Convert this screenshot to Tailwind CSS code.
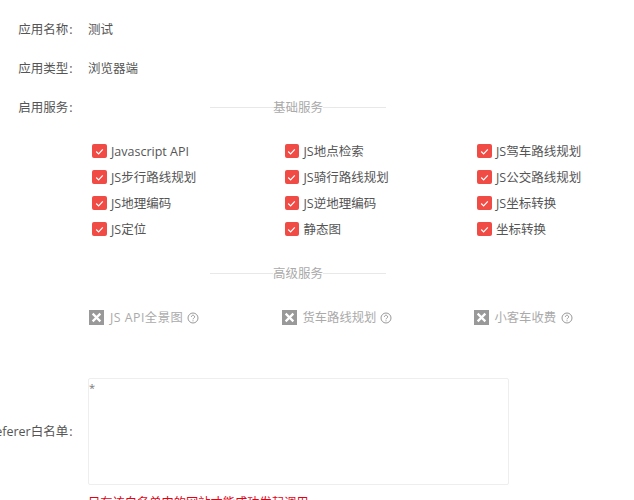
<!DOCTYPE html>
<html lang="zh-CN">
<head>
<meta charset="utf-8">
<script src="https://cdn.jsdelivr.net/npm/@tailwindcss/browser@4"></script>
</head>
<body class="bg-white">
<div class="relative h-[500px] w-[634px] overflow-hidden font-['Open_Sans','Noto_Sans_CJK_SC',sans-serif] text-[12.5px] text-[#555]">
  <div class="flex h-[20px] mt-[20px] items-center">
    <div class="w-[72.5px] shrink-0 whitespace-nowrap text-right">应用名称<span class="ml-px">:</span></div>
    <div class="ml-[15.5px]">测试</div>
  </div>
  <div class="flex h-[20px] mt-[19px] items-center">
    <div class="w-[72.5px] shrink-0 whitespace-nowrap text-right">应用类型<span class="ml-px">:</span></div>
    <div class="ml-[15.5px]">浏览器端</div>
  </div>
  <div class="flex h-[20px] mt-[19px] items-center">
    <div class="w-[72.5px] shrink-0 whitespace-nowrap text-right">启用服务<span class="ml-px">:</span></div>
    <div class="ml-[137.5px] flex items-center text-[#aaa]">
      <span class="h-px w-[63px] -translate-y-px bg-[#e8e8e8]"></span>
      <span>基础服务</span>
      <span class="h-px w-[63px] -translate-y-px bg-[#e8e8e8]"></span>
    </div>
  </div>

  <div class="ml-[92px] mt-[21px] grid w-[542px] grid-cols-[192.5px_192.5px_1fr] auto-rows-[26px] items-center">
    <label class="flex items-center"><span class="flex size-[14.5px] -translate-y-px items-center justify-center rounded-[2px] bg-[#f04b45]"><svg class="size-[11px]" viewBox="0 0 10 10" fill="none" stroke="#fff" stroke-width="1.1"><path d="M2 5l2.2 2.2L8 3"/></svg></span><span class="ml-[4.5px]">Javascript API</span></label>
    <label class="flex items-center"><span class="flex size-[14.5px] -translate-y-px items-center justify-center rounded-[2px] bg-[#f04b45]"><svg class="size-[11px]" viewBox="0 0 10 10" fill="none" stroke="#fff" stroke-width="1.1"><path d="M2 5l2.2 2.2L8 3"/></svg></span><span class="ml-[4.5px]">JS地点检索</span></label>
    <label class="flex items-center"><span class="flex size-[14.5px] -translate-y-px items-center justify-center rounded-[2px] bg-[#f04b45]"><svg class="size-[11px]" viewBox="0 0 10 10" fill="none" stroke="#fff" stroke-width="1.1"><path d="M2 5l2.2 2.2L8 3"/></svg></span><span class="ml-[4.5px]">JS驾车路线规划</span></label>
    <label class="flex items-center"><span class="flex size-[14.5px] -translate-y-px items-center justify-center rounded-[2px] bg-[#f04b45]"><svg class="size-[11px]" viewBox="0 0 10 10" fill="none" stroke="#fff" stroke-width="1.1"><path d="M2 5l2.2 2.2L8 3"/></svg></span><span class="ml-[4.5px]">JS步行路线规划</span></label>
    <label class="flex items-center"><span class="flex size-[14.5px] -translate-y-px items-center justify-center rounded-[2px] bg-[#f04b45]"><svg class="size-[11px]" viewBox="0 0 10 10" fill="none" stroke="#fff" stroke-width="1.1"><path d="M2 5l2.2 2.2L8 3"/></svg></span><span class="ml-[4.5px]">JS骑行路线规划</span></label>
    <label class="flex items-center"><span class="flex size-[14.5px] -translate-y-px items-center justify-center rounded-[2px] bg-[#f04b45]"><svg class="size-[11px]" viewBox="0 0 10 10" fill="none" stroke="#fff" stroke-width="1.1"><path d="M2 5l2.2 2.2L8 3"/></svg></span><span class="ml-[4.5px]">JS公交路线规划</span></label>
    <label class="flex items-center"><span class="flex size-[14.5px] -translate-y-px items-center justify-center rounded-[2px] bg-[#f04b45]"><svg class="size-[11px]" viewBox="0 0 10 10" fill="none" stroke="#fff" stroke-width="1.1"><path d="M2 5l2.2 2.2L8 3"/></svg></span><span class="ml-[4.5px]">JS地理编码</span></label>
    <label class="flex items-center"><span class="flex size-[14.5px] -translate-y-px items-center justify-center rounded-[2px] bg-[#f04b45]"><svg class="size-[11px]" viewBox="0 0 10 10" fill="none" stroke="#fff" stroke-width="1.1"><path d="M2 5l2.2 2.2L8 3"/></svg></span><span class="ml-[4.5px]">JS逆地理编码</span></label>
    <label class="flex items-center"><span class="flex size-[14.5px] -translate-y-px items-center justify-center rounded-[2px] bg-[#f04b45]"><svg class="size-[11px]" viewBox="0 0 10 10" fill="none" stroke="#fff" stroke-width="1.1"><path d="M2 5l2.2 2.2L8 3"/></svg></span><span class="ml-[4.5px]">JS坐标转换</span></label>
    <label class="flex items-center"><span class="flex size-[14.5px] -translate-y-px items-center justify-center rounded-[2px] bg-[#f04b45]"><svg class="size-[11px]" viewBox="0 0 10 10" fill="none" stroke="#fff" stroke-width="1.1"><path d="M2 5l2.2 2.2L8 3"/></svg></span><span class="ml-[4.5px]">JS定位</span></label>
    <label class="flex items-center"><span class="flex size-[14.5px] -translate-y-px items-center justify-center rounded-[2px] bg-[#f04b45]"><svg class="size-[11px]" viewBox="0 0 10 10" fill="none" stroke="#fff" stroke-width="1.1"><path d="M2 5l2.2 2.2L8 3"/></svg></span><span class="ml-[4.5px]">静态图</span></label>
    <label class="flex items-center"><span class="flex size-[14.5px] -translate-y-px items-center justify-center rounded-[2px] bg-[#f04b45]"><svg class="size-[11px]" viewBox="0 0 10 10" fill="none" stroke="#fff" stroke-width="1.1"><path d="M2 5l2.2 2.2L8 3"/></svg></span><span class="ml-[4.5px]">坐标转换</span></label>
  </div>

  <div class="ml-[210px] mt-[21px] flex h-[20px] items-center text-[#aaa]">
    <span class="h-px w-[63px] -translate-y-px bg-[#e8e8e8]"></span>
    <span>高级服务</span>
    <span class="h-px w-[63px] -translate-y-px bg-[#e8e8e8]"></span>
  </div>

  <div class="ml-[89px] mt-[24px] grid w-[545px] grid-cols-[192.5px_192px_1fr] items-center text-[12.3px] text-[#aaa]">
    <div class="flex h-[20px] items-center"><span class="flex size-[15px] -translate-y-px items-center justify-center bg-[#999]"><svg class="size-[11px]" viewBox="0 0 10 10" fill="none" stroke="#fff" stroke-width="2"><path d="M1.5 1.5l7 7M8.5 1.5l-7 7"/></svg></span><span class="ml-[6px] tracking-[0.5px]">JS API全景图</span><svg class="ml-[3.5px] size-[12px]" viewBox="0 0 12 12" fill="none" stroke="#999"><circle cx="6" cy="6" r="5"/><path d="M4.4 4.8a1.6 1.6 0 1 1 2.4 1.4c-.5.3-.8.6-.8 1.1M6 8.3v1"/></svg></div>
    <div class="flex h-[20px] items-center"><span class="flex size-[15px] -translate-y-px items-center justify-center bg-[#999]"><svg class="size-[11px]" viewBox="0 0 10 10" fill="none" stroke="#fff" stroke-width="2"><path d="M1.5 1.5l7 7M8.5 1.5l-7 7"/></svg></span><span class="ml-[6px]">货车路线规划</span><svg class="ml-[4px] size-[12px]" viewBox="0 0 12 12" fill="none" stroke="#999"><circle cx="6" cy="6" r="5"/><path d="M4.4 4.8a1.6 1.6 0 1 1 2.4 1.4c-.5.3-.8.6-.8 1.1M6 8.3v1"/></svg></div>
    <div class="flex h-[20px] items-center"><span class="flex size-[15px] -translate-y-px items-center justify-center bg-[#999]"><svg class="size-[11px]" viewBox="0 0 10 10" fill="none" stroke="#fff" stroke-width="2"><path d="M1.5 1.5l7 7M8.5 1.5l-7 7"/></svg></span><span class="ml-[6px]">小客车收费</span><svg class="ml-[5px] size-[12px]" viewBox="0 0 12 12" fill="none" stroke="#999"><circle cx="6" cy="6" r="5"/><path d="M4.4 4.8a1.6 1.6 0 1 1 2.4 1.4c-.5.3-.8.6-.8 1.1M6 8.3v1"/></svg></div>
  </div>

  <div class="mt-[50px] flex items-center">
    <div class="flex w-[72.5px] shrink-0 translate-y-px justify-end whitespace-nowrap">Referer白名单<span class="ml-px">:</span></div>
    <div class="ml-[15.5px] h-[107px] w-[421px] rounded-[2px] border border-[#eee] text-[11px] leading-[18px] text-[#777]">*</div>
  </div>
  <div class="ml-[88px] mt-[9px] whitespace-nowrap text-[12.25px] text-[#e60012]">只有该白名单中的网站才能成功发起调用</div>
</div>
</body>
</html>
